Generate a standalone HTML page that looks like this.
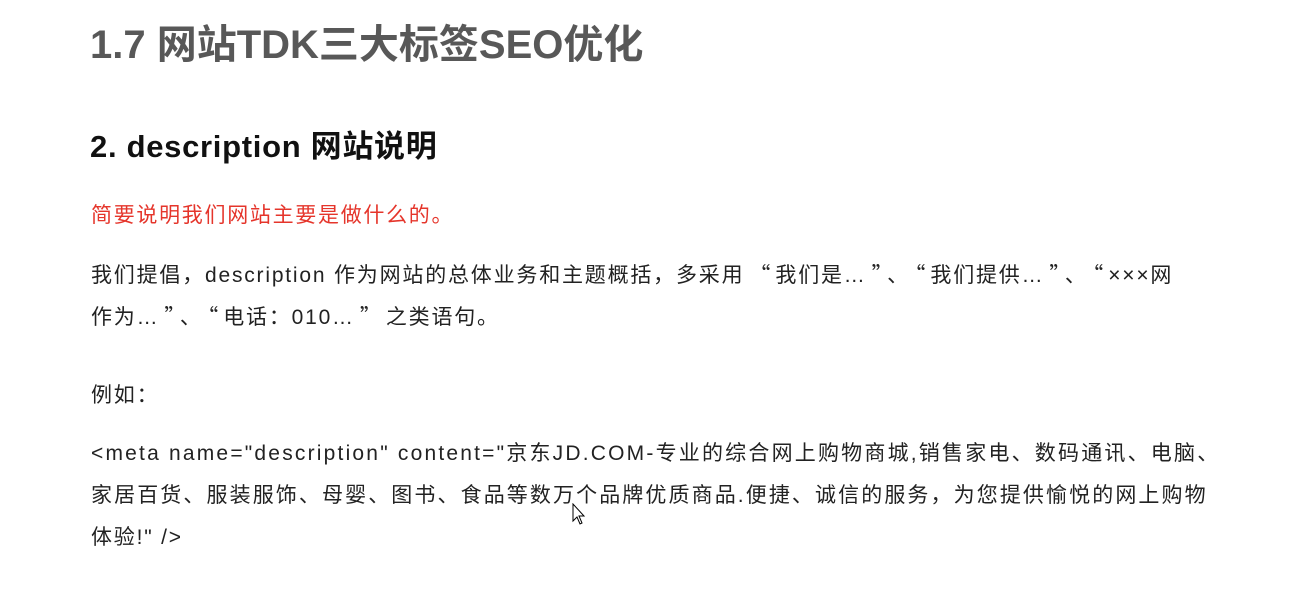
<!DOCTYPE html>
<html><head><meta charset="utf-8"><style>
body{margin:0;width:1297px;height:598px;background:#fff;overflow:hidden;position:relative;font-family:"Liberation Sans","Noto Sans CJK SC",sans-serif;}
.l{position:absolute;left:91px;white-space:nowrap;font-size:21px;letter-spacing:1.8px;color:#222;line-height:1;}
.c{font-family:"Noto Sans CJK SC",sans-serif;letter-spacing:0;padding:0 5px}
</style></head><body>
<div class="l" style="top:25px;font-size:40px;font-weight:bold;color:#585858;left:90px;letter-spacing:0">1.7 网站TDK三大标签SEO优化</div>
<div class="l" style="top:131px;font-size:31px;font-weight:bold;color:#111;left:90px;letter-spacing:0.7px">2. description 网站说明</div>
<div class="l" style="top:205px;color:#e5352b;letter-spacing:1.7px">简要说明我们网站主要是做什么的。</div>
<div class="l" style="top:264px">我们提倡，description 作为网站的总体业务和主题概括，多采用<span class="c">“</span>我们是…<span class="c">”</span>、<span class="c">“</span>我们提供…<span class="c">”</span>、<span class="c">“</span>×××网</div>
<div class="l" style="top:306px">作为…<span class="c">”</span>、<span class="c">“</span>电话：010…<span class="c">”</span>之类语句。</div>
<div class="l" style="top:385px">例如：</div>
<div class="l" style="top:443px;letter-spacing:2.2px">&lt;meta name="description" content="京东JD.COM-专业的综合网上购物商城,销售家电、数码通讯、电脑、</div>
<div class="l" style="top:485px;letter-spacing:2.1px">家居百货、服装服饰、母婴、图书、食品等数万个品牌优质商品.便捷、诚信的服务，为您提供愉悦的网上购物</div>
<div class="l" style="top:527px">体验!" /&gt;</div>
<svg style="position:absolute;left:572px;top:503px" width="16" height="24" viewBox="0 0 16 24"><path d="M1 1 L1 18 L5 14 L8 21 L10 20 L7 13 L12 13 Z" fill="#fff" stroke="#000" stroke-width="1"/></svg>
</body></html>
